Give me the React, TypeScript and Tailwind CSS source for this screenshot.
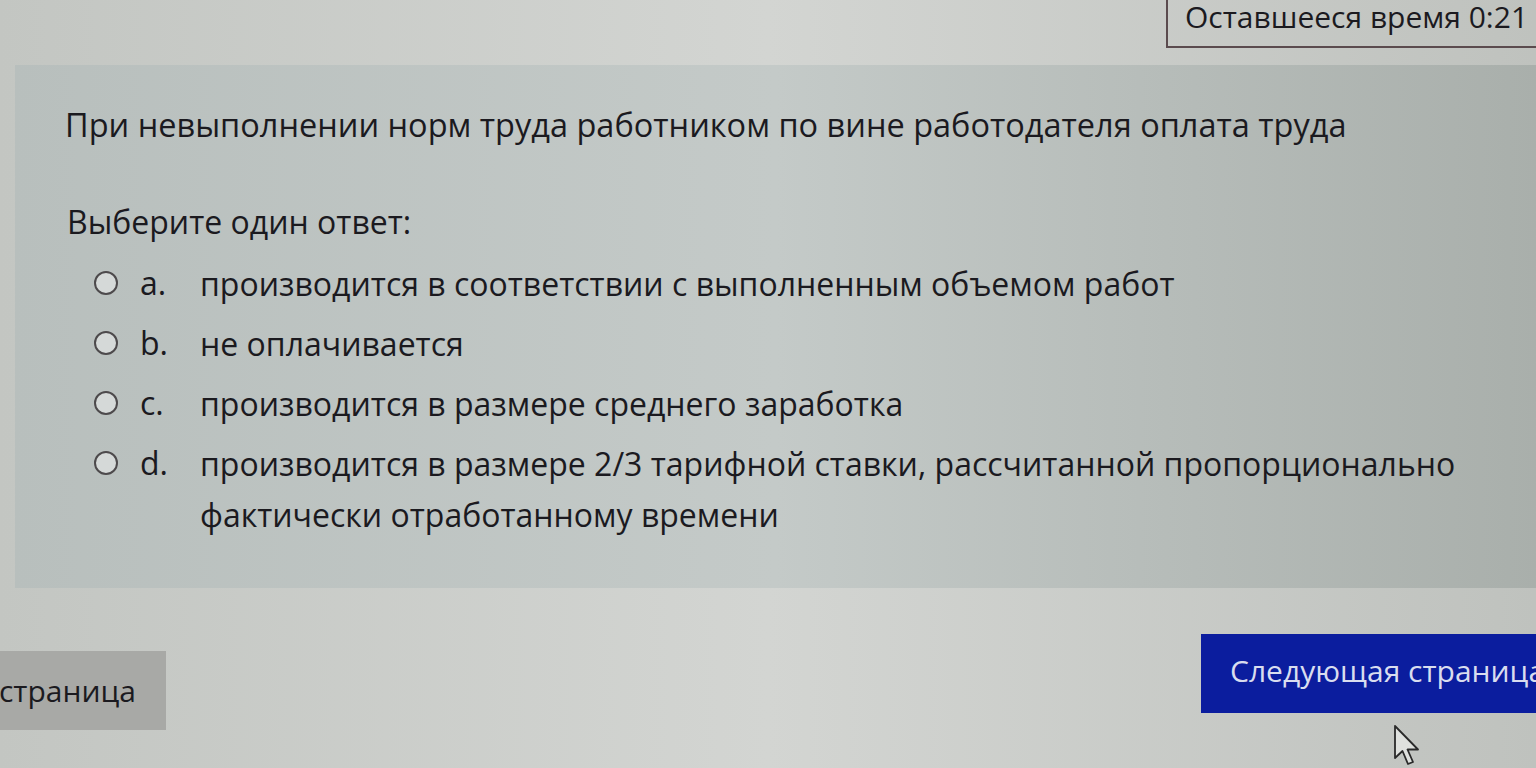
import React from "react";

const options = [
  { l: "a.", t: "производится в соответствии с выполненным объемом работ" },
  { l: "b.", t: "не оплачивается" },
  { l: "c.", t: "производится в размере среднего заработка" },
  {
    l: "d.",
    t: "производится в размере 2/3 тарифной ставки, рассчитанной пропорционально фактически отработанному времени",
  },
];

export default function App() {
  return (
    <div
      className="relative w-[1536px] h-[768px] overflow-hidden bg-gradient-to-r from-[#c3c6c2] via-[#d3d5d2] to-[#bfc2be] text-[#1b1a1f]"
      style={{ fontFamily: '"Open Sans", "Noto Sans", sans-serif' }}
    >
      {/* timer */}
      <div className="flex justify-end h-[48px]">
        <div className="w-[370px] h-[48px] border-l-2 border-b-2 border-[#5b4b4e] pl-[17px] flex items-start">
          <span className="text-[30px] leading-[34px] whitespace-nowrap">Оставшееся время 0:21</span>
        </div>
      </div>

      {/* question panel */}
      <div className="ml-[15px] mt-[17px] h-[523px] bg-gradient-to-r from-[#b8bfbd] via-[#c4cac8] to-[#a9afab] pl-[50px] pt-[40px]">
        <p className="text-[32.5px] leading-[40px] whitespace-nowrap">
          При невыполнении норм труда работником по вине работодателя оплата труда
        </p>
        <p className="mt-[57px] text-[32px] leading-[40px] pl-[2px]">Выберите один ответ:</p>
        <div className="mt-[21px] flex flex-col gap-[14px]">
          {options.map((o) => (
            <div key={o.l} className="flex items-start pl-[29px]">
              <div className="h-[40px] flex items-center shrink-0">
                <span className="block w-[24px] h-[24px] rounded-full border-2 border-[#4d4a4c] bg-[#d5d9d8]" />
              </div>
              <span className="w-[82px] pl-[22px] shrink-0 text-[32px] leading-[40px]">{o.l}</span>
              <span className="w-[1260px] text-[32px] leading-[51px] -mt-[5px]">{o.t}</span>
            </div>
          ))}
        </div>
      </div>

      {/* nav buttons */}
      <div className="flex justify-between items-start">
        <div className="mt-[63px] w-[166px] h-[79px] bg-[#a8a9a6] overflow-hidden flex items-center justify-end pr-[30px]">
          <span className="text-[30px] leading-[36px] whitespace-nowrap">Предыдущая страница</span>
        </div>
        <div className="mt-[46px] w-[335px] h-[79px] bg-[#0b1d9e] flex items-center pl-[29px] pb-[6px] overflow-hidden">
          <span className="text-[30px] leading-[36px] whitespace-nowrap text-[#d9ddef]">Следующая страница</span>
        </div>
      </div>

      {/* cursor */}
      <svg
        className="absolute left-[1393px] top-[724px]"
        width="30"
        height="44"
        viewBox="0 0 30 44"
      >
        <path
          d="M2 2 L2 34 L9.5 27 L15 40 L20 38 L14.5 25.5 L25 25.5 Z"
          fill="#dfe1de"
          stroke="#2a2a2a"
          strokeWidth="1.8"
          strokeLinejoin="round"
        />
      </svg>
    </div>
  );
}
